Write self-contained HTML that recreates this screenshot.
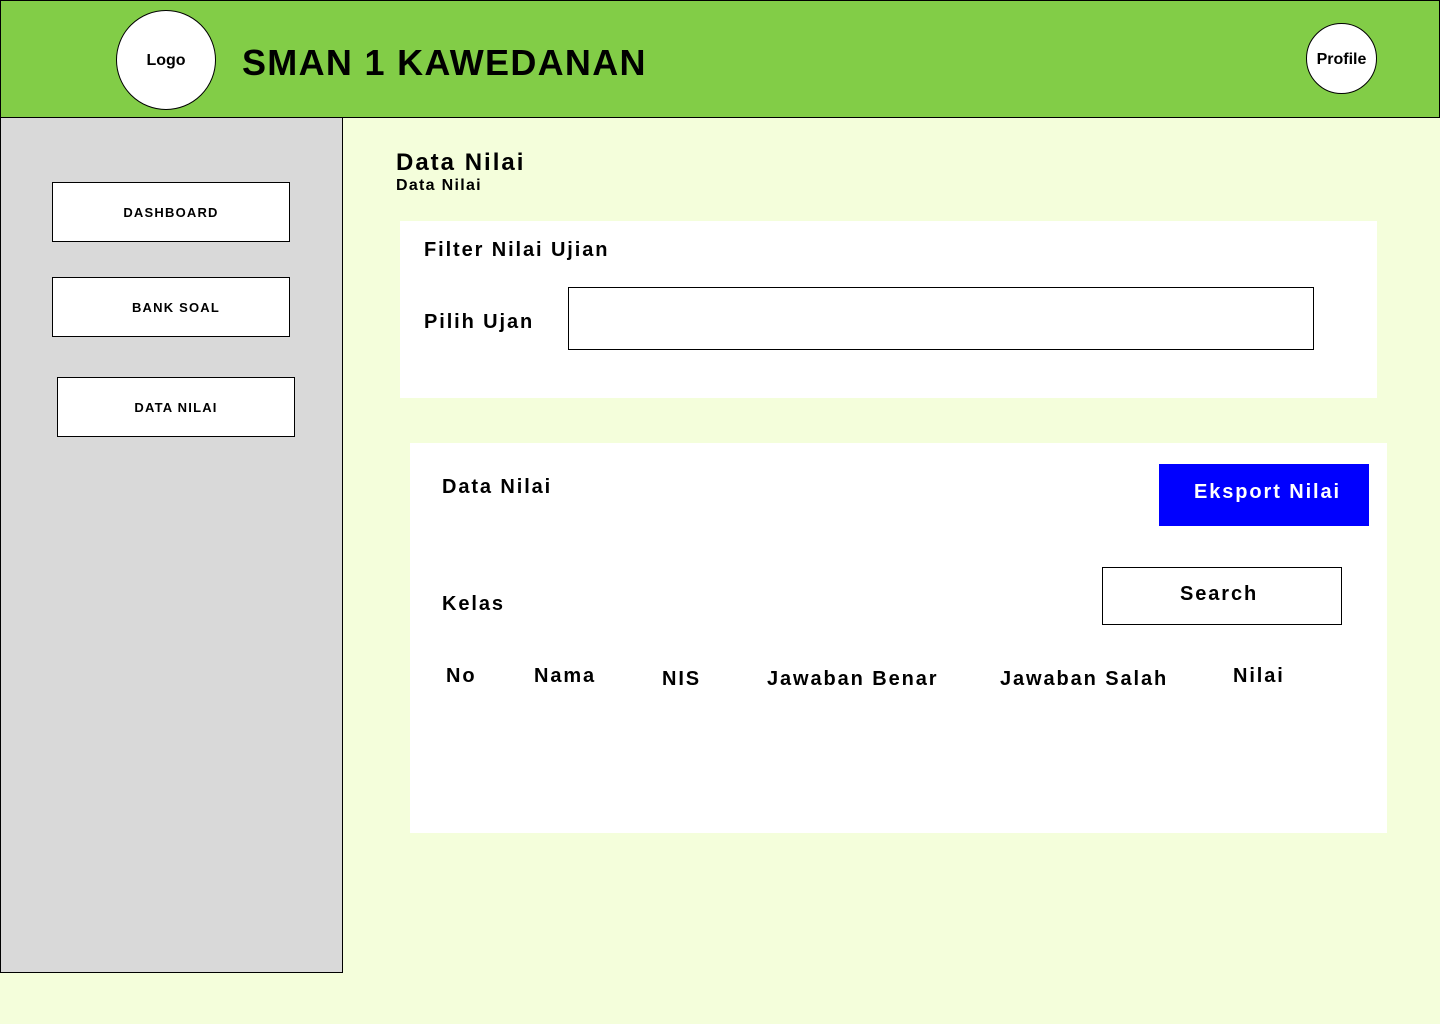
<!DOCTYPE html>
<html><head><style>
body{margin:0;width:1440px;height:1024px;background:#f4fedb;font-family:"Liberation Sans",sans-serif;position:relative;overflow:hidden;color:#000}
div,span{position:absolute;box-sizing:border-box}
.t{font-weight:bold;letter-spacing:1.9px;white-space:nowrap}
.nav{background:#fff;border:1px solid #000;font-size:13px;font-weight:bold;letter-spacing:1.2px;display:flex;align-items:center;justify-content:center}
</style></head><body>
<div style="left:0;top:0;width:1440px;height:118px;background:#82cd47;border:1px solid #000"></div>
<div style="left:116px;top:10px;width:100px;height:100px;border-radius:50%;background:#fff;border:1px solid #000;display:flex;align-items:center;justify-content:center;font-size:16px;font-weight:bold;padding-top:2px">Logo</div>
<span class="t" style="left:242px;top:42px;font-size:36px;letter-spacing:1.3px">SMAN 1 KAWEDANAN</span>
<div style="left:1306px;top:23px;width:71px;height:71px;border-radius:50%;background:#fff;border:1px solid #000;display:flex;align-items:center;justify-content:center;font-size:16px;font-weight:bold;padding-top:2px">Profile</div>
<div style="left:0;top:117px;width:343px;height:856px;background:#d9d9d9;border:1px solid #000"></div>
<div class="nav" style="left:52px;top:182px;width:238px;height:60px">DASHBOARD</div>
<div class="nav" style="left:52px;top:277px;width:238px;height:60px;padding-left:10px">BANK SOAL</div>
<div class="nav" style="left:57px;top:377px;width:238px;height:60px">DATA NILAI</div>
<span class="t" style="left:396px;top:149px;font-size:24px;letter-spacing:2px">Data Nilai</span>
<span class="t" style="left:396px;top:177px;font-size:16px;letter-spacing:1.3px">Data Nilai</span>
<div style="left:400px;top:221px;width:977px;height:177px;background:#fff"></div>
<span class="t" style="left:424px;top:239px;font-size:20px">Filter Nilai Ujian</span>
<span class="t" style="left:424px;top:311px;font-size:20px">Pilih Ujan</span>
<div style="left:568px;top:287px;width:746px;height:63px;border:1px solid #000;background:#fff"></div>
<div style="left:410px;top:443px;width:977px;height:390px;background:#fff"></div>
<span class="t" style="left:442px;top:476px;font-size:20px">Data Nilai</span>
<div style="left:1159px;top:464px;width:210px;height:62px;background:#0000ff"></div>
<span class="t" style="left:1194px;top:481px;font-size:20px;color:#fff">Eksport Nilai</span>
<div style="left:1102px;top:567px;width:240px;height:58px;border:1px solid #000;background:#fff"></div>
<span class="t" style="left:1180px;top:583px;font-size:20px">Search</span>
<span class="t" style="left:442px;top:593px;font-size:20px">Kelas</span>
<span class="t" style="left:446px;top:665px;font-size:20px">No</span>
<span class="t" style="left:534px;top:665px;font-size:20px">Nama</span>
<span class="t" style="left:662px;top:668px;font-size:20px">NIS</span>
<span class="t" style="left:767px;top:668px;font-size:20px">Jawaban Benar</span>
<span class="t" style="left:1000px;top:668px;font-size:20px">Jawaban Salah</span>
<span class="t" style="left:1233px;top:665px;font-size:20px">Nilai</span>
</body></html>
